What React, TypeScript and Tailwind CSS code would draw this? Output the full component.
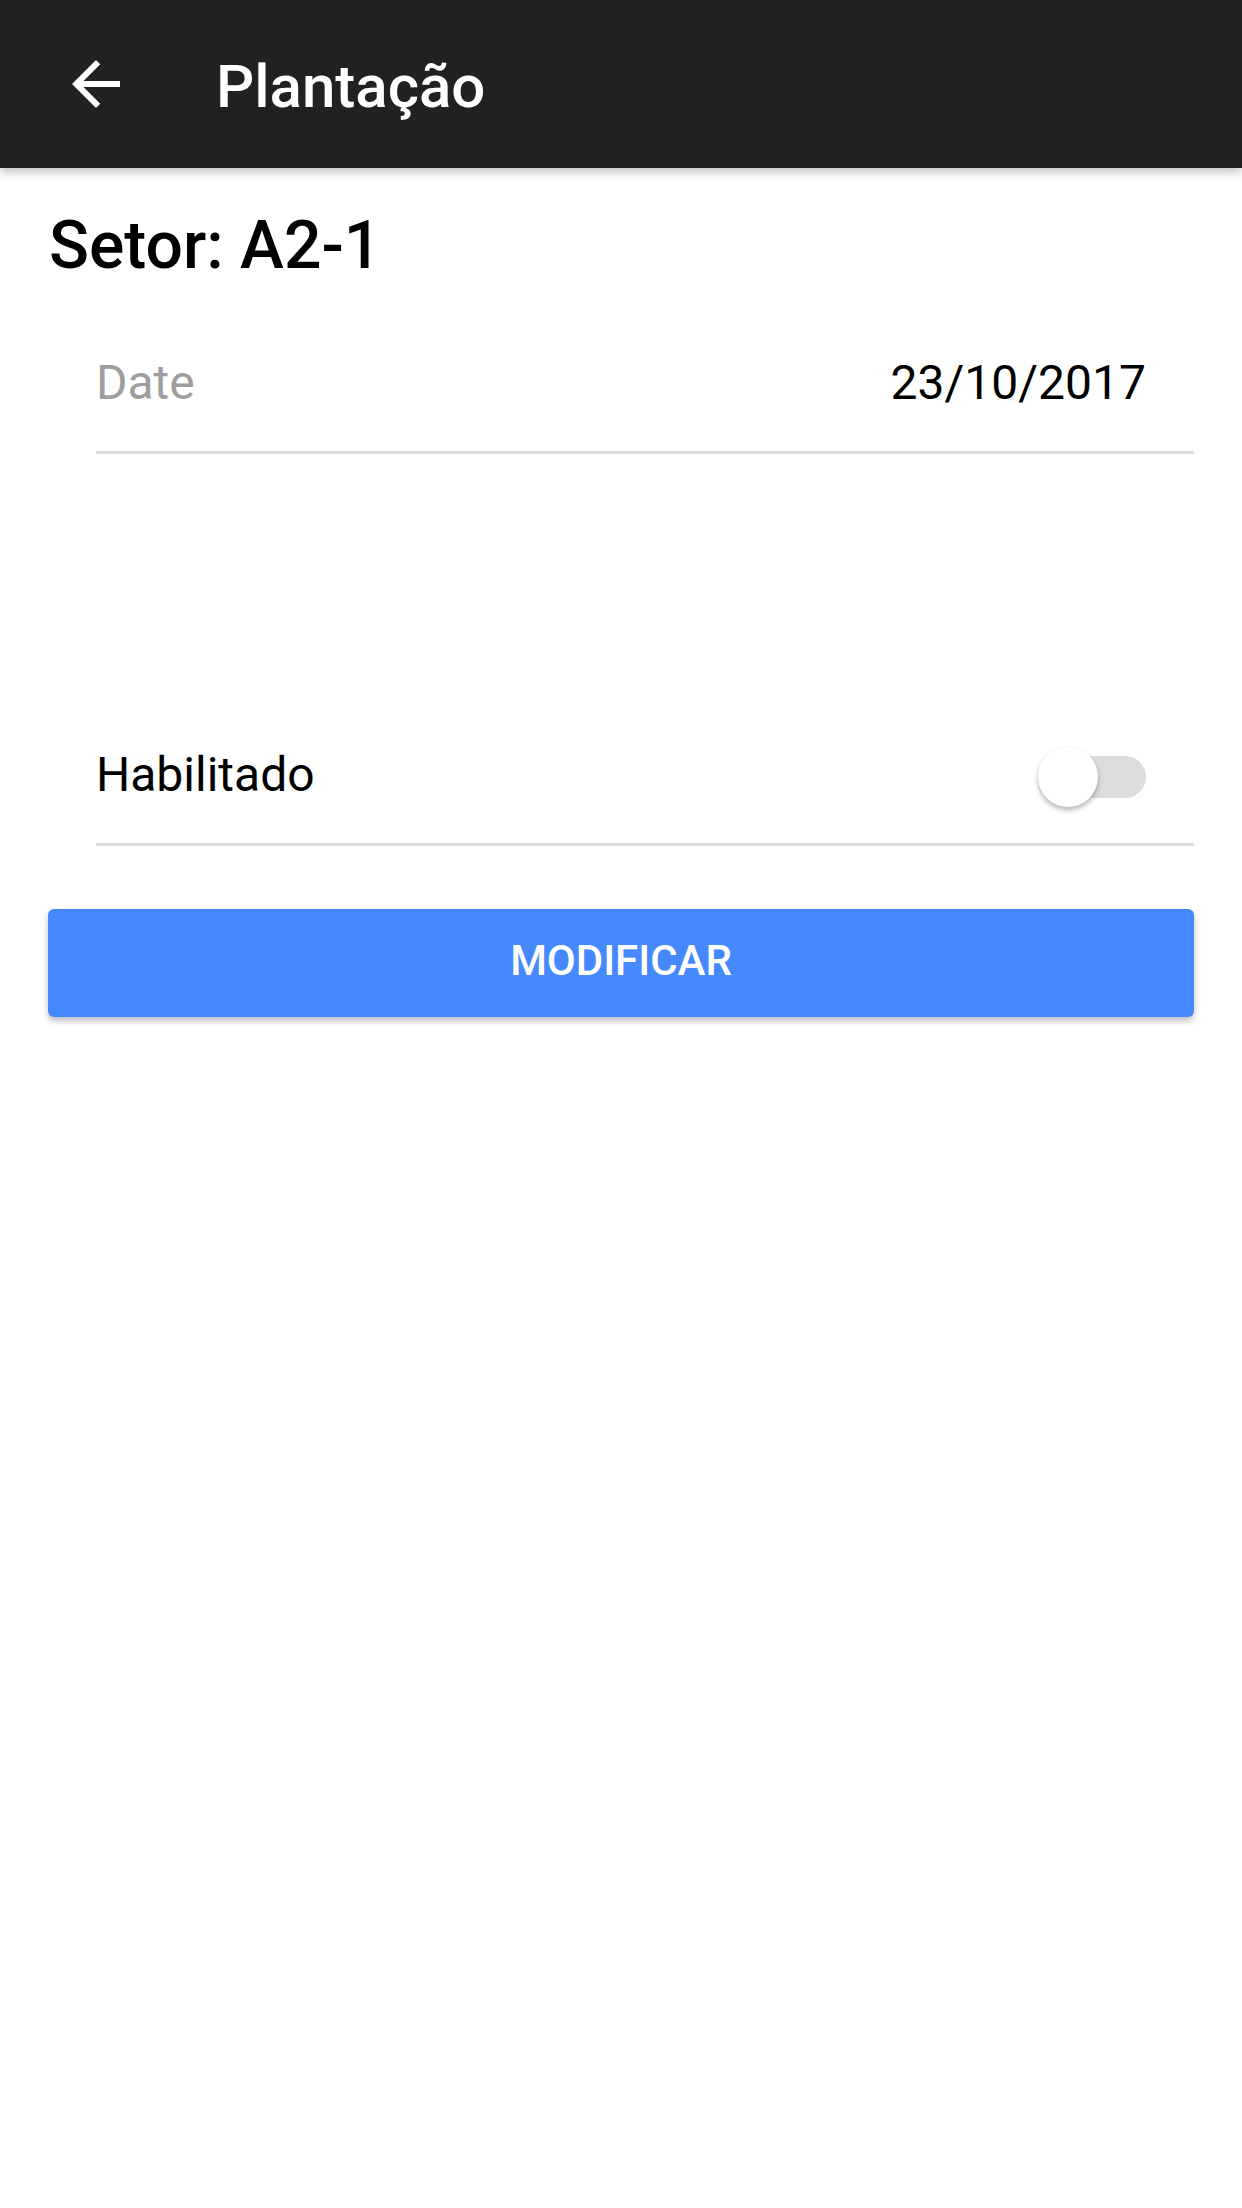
import React, { useState } from 'react';

const BackArrow: React.FC = () => (
  <svg width="72" height="72" viewBox="0 0 24 24" fill="#ffffff" className="ml-[60px] shrink-0">
    <path d="M20 11H7.83l5.59-5.59L12 4l-8 8 8 8 1.41-1.41L7.83 13H20v-2z" />
  </svg>
);

const Toggle: React.FC<{ on: boolean; onChange: () => void }> = ({ on, onChange }) => (
  <button className="relative mr-[48px] w-[108px] h-[60px] shrink-0" onClick={onChange} aria-pressed={on}>
    <span
      className={`absolute left-[6px] top-[9px] w-[102px] h-[42px] rounded-full ${
        on ? 'bg-[#a8c8ff]' : 'bg-[#dcdcdc]'
      }`}
    />
    <span
      className={`absolute top-0 w-[60px] h-[60px] rounded-full shadow-[0_3px_5px_rgba(0,0,0,0.3)] ${
        on ? 'left-[48px] bg-[#4689ff]' : 'left-0 bg-white'
      }`}
    />
  </button>
);

export default function App() {
  const [enabled, setEnabled] = useState(false);

  return (
    <div className="min-h-[2208px] bg-white font-['Roboto',sans-serif]">
      <header className="relative z-10 h-[168px] bg-[#212121] flex items-center shadow-[0_4px_10px_rgba(0,0,0,0.25)]">
        <BackArrow />
        <h1 className="ml-[84px] pt-[5px] text-[60px] leading-[60px] font-medium text-white">Plantação</h1>
      </header>

      <h2 className="mt-[45px] ml-[49px] text-[66px] leading-[66px] font-medium text-black">Setor: A2-1</h2>

      <div className="ml-[96px] mr-[48px]">
        <div className="mt-[80px] flex justify-between text-[48px] leading-[48px]">
          <span className="text-[#9e9e9e]">Date</span>
          <span className="text-black pr-[48px]">23/10/2017</span>
        </div>
        <div className="mt-[44px] h-[3px] bg-[#dedede]" />

        <div className="mt-[293px] h-[60px] flex items-start justify-between">
          <span className="text-[48px] leading-[56px] text-black">Habilitado</span>
          <Toggle on={enabled} onChange={() => setEnabled(!enabled)} />
        </div>
        <div className="mt-[36px] h-[3px] bg-[#dedede]" />
      </div>

      <button className="mt-[63px] mx-[48px] w-[1146px] h-[108px] rounded-[6px] bg-[#4689ff] shadow-[0_4px_6px_rgba(0,0,0,0.25)] flex items-center justify-center pb-[4px]">
        <span className="text-[42px] leading-[42px] font-medium text-white">MODIFICAR</span>
      </button>
    </div>
  );
}
